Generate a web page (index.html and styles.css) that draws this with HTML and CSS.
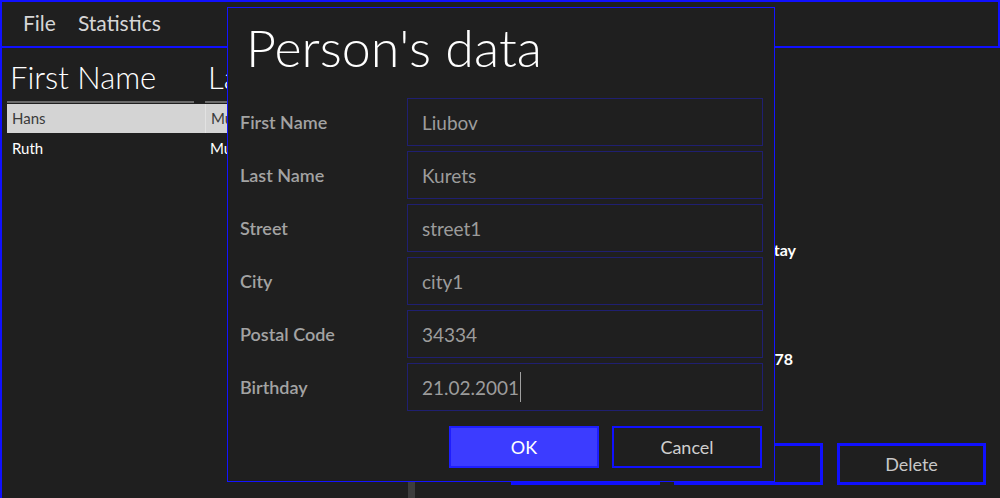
FILE: index.html
```html
<!DOCTYPE html>
<html>
<head>
<meta charset="utf-8">
<link rel="stylesheet" href="styles.css">
</head>
<body>
<div class="app">
  <div class="menubar">
    <span class="menu-item">File</span>
    <span class="menu-item">Statistics</span>
  </div>
  <div class="main">
    <div class="list">
      <div class="table">
        <div class="thead">
          <div class="th">First Name</div>
          <div class="th">Last Name</div>
        </div>
        <div class="tr selected">
          <div class="td">Hans</div>
          <div class="td">Mustermann</div>
        </div>
        <div class="tr">
          <div class="td">Ruth</div>
          <div class="td">Mustermann</div>
        </div>
      </div>
    </div>
    <div class="splitter"></div>
    <div class="details">
      <div class="fields">
        <div class="field">Stay</div>
        <div class="field">12345678</div>
      </div>
      <div class="actions">
        <button class="btn">Add</button>
        <button class="btn">Edit</button>
        <button class="btn">Delete</button>
      </div>
    </div>
  </div>
</div>

<div class="dialog">
  <h1 class="dialog-title">Person's data</h1>
  <div class="form">
    <label class="label">First Name</label><div class="input">Liubov</div>
    <label class="label">Last Name</label><div class="input">Kurets</div>
    <label class="label">Street</label><div class="input">street1</div>
    <label class="label">City</label><div class="input">city1</div>
    <label class="label">Postal Code</label><div class="input">34334</div>
    <label class="label">Birthday</label><div class="input">21.02.2001<span class="caret"></span></div>
  </div>
  <div class="dialog-buttons">
    <button class="dbtn primary">OK</button>
    <button class="dbtn">Cancel</button>
  </div>
</div>
</body>
</html>
```

FILE: styles.css
```css
* { box-sizing: border-box; }
html, body {
  margin: 0;
  padding: 0;
  width: 1000px;
  height: 498px;
  overflow: hidden;
  background: #1f1f1f;
  font-family: Lato, "Open Sans", sans-serif;
}
.app {
  width: 1000px;
  height: 498px;
  display: flex;
  flex-direction: column;
}
.menubar {
  height: 48px;
  flex: none;
  border: 2px solid #1010ff;
  display: flex;
  align-items: center;
  padding-left: 21px;
  gap: 22px;
}
.menu-item {
  color: #d6d6d6;
  font-size: 21px;
  line-height: 1;
  padding-bottom: 3px;
}
.main {
  flex: 1;
  display: flex;
  border-left: 2px solid #1010ff;
  min-height: 0;
}
.list {
  width: 406px;
  flex: none;
  padding: 5px 0 0 5px;
}
.table { display: flex; flex-direction: column; }
.thead {
  display: grid;
  grid-template-columns: 198px 210px;
}
.th {
  font-weight: 300;
  font-size: 31px;
  color: #ffffff;
  line-height: 48px;
  padding-left: 3px;
  margin-right: 11px;
  border-bottom: 2px solid #6b6b6b;
  white-space: nowrap;
}
.tr {
  display: grid;
  grid-template-columns: 198px 210px;
  height: 29px;
  margin-top: 1px;
}
.td {
  font-size: 15px;
  color: #ffffff;
  line-height: 28px;
  padding-left: 5px;
  white-space: nowrap;
  overflow: hidden;
}
.tr.selected { background: #d4d4d4; }
.tr.selected .td { color: #3a3a3a; }
.tr.selected .td + .td { border-left: 1px solid #e2e2e2; }
.splitter {
  width: 7px;
  flex: none;
  background: #3d3d3d;
}
.details {
  flex: 1;
  display: flex;
  flex-direction: column;
  justify-content: space-between;
}
.fields {
  display: flex;
  flex-direction: column;
  align-items: flex-end;
  gap: 87px;
  padding-top: 191px;
  padding-right: 204px;
}
.field {
  color: #ffffff;
  font-weight: 700;
  font-size: 16px;
  line-height: 22px;
}
.field + .field { margin-right: 3px; }
.actions {
  display: flex;
  justify-content: flex-end;
  gap: 14px;
  padding: 0 14px 13px 0;
}
.btn {
  width: 149px;
  height: 42px;
  background: transparent;
  border: 3px solid #1010ff;
  color: #c8c8c8;
  font-family: Lato, "Open Sans", sans-serif;
  font-size: 18px;
}

/* dialog overlay */
.dialog {
  position: absolute;
  left: 227px;
  top: 7px;
  width: 548px;
  height: 475px;
  background: #1f1f1f;
  border: 1px solid #1414ff;
  display: flex;
  flex-direction: column;
}
.dialog-title {
  margin: 0;
  font-weight: 300;
  font-size: 52px;
  line-height: 1;
  color: #ffffff;
  padding: 13px 0 0 18px;
  height: 90px;
}
.form {
  display: grid;
  grid-template-columns: 167px 356px;
  grid-auto-rows: 48px;
  row-gap: 5px;
  padding-left: 12px;
}
.label {
  color: #a3a3a3;
  font-weight: 600;
  font-size: 18px;
  display: flex;
  align-items: center;
}
.input {
  border: 1px solid #1f1f70;
  color: #9c9c9c;
  font-size: 19px;
  display: flex;
  align-items: center;
  padding-left: 14px;
}
.caret {
  display: inline-block;
  width: 1px;
  height: 30px;
  background: #a0a0a0;
  margin-left: 1px;
}
.dialog-buttons {
  display: flex;
  justify-content: flex-end;
  gap: 13px;
  padding: 15px 12px 0 0;
}
.dbtn {
  width: 150px;
  height: 42px;
  background: transparent;
  border: 2px solid #1010ff;
  color: #cfcfcf;
  font-family: Lato, "Open Sans", sans-serif;
  font-size: 18px;
}
.dbtn.primary {
  background: #3c3cff;
  border-color: #1e1eff;
  color: #ffffff;
}
```
